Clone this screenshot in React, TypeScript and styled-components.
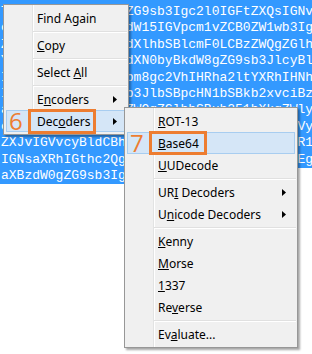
import React from "react";
import styled, { createGlobalStyle } from "styled-components";

const paragraph =
    "Lorem ipsum dolor sit amet, consetetur sadipscing elitr, sed diam nonumy eirmod tempor invidunt ut labore et dolore magna aliquyam erat, sed diam voluptua. At vero eos et accusam et justo duo dolores et ea rebum. Stet clita kasd gubergren, no sea takimata sanctus est Lorem ipsum dolor sit amet.";

// base64 with MIME style wrapping, 76 chars a line
const encodedLines = btoa(paragraph + " " + paragraph).match(/.{1,76}/g) ?? [];

type Entry =
    | { kind: "sep" }
    | { kind: "item"; label: string; key?: number; sub?: boolean; active?: boolean; mark?: string };

const mainMenu: Entry[] = [
    { kind: "item", label: "Find Again" },
    { kind: "sep" },
    { kind: "item", label: "Copy", key: 0 },
    { kind: "sep" },
    { kind: "item", label: "Select All", key: 7 },
    { kind: "sep" },
    { kind: "item", label: "Encoders", key: 1, sub: true },
    { kind: "item", label: "Decoders", key: 3, sub: true, active: true, mark: "6" },
];

const decodersMenu: Entry[] = [
    { kind: "item", label: "ROT-13", key: 0 },
    { kind: "item", label: "Base64", key: 0, active: true, mark: "7" },
    { kind: "item", label: "UUDecode", key: 0 },
    { kind: "sep" },
    { kind: "item", label: "URI Decoders", key: 2, sub: true },
    { kind: "item", label: "Unicode Decoders", key: 1, sub: true },
    { kind: "sep" },
    { kind: "item", label: "Kenny", key: 0 },
    { kind: "item", label: "Morse", key: 0 },
    { kind: "item", label: "1337", key: 0 },
    { kind: "item", label: "Reverse", key: 2 },
    { kind: "sep" },
    { kind: "item", label: "Evaluate...", key: 2 },
];

function Label({ text, at }: { text: string; at?: number }) {
    if (at === undefined) return <>{text}</>;
    return (
        <>
            {text.slice(0, at)}
            <u>{text[at]}</u>
            {text.slice(at + 1)}
        </>
    );
}

function MenuList({ entries, boxWidth, boxHeight }: { entries: Entry[]; boxWidth: number; boxHeight: number }) {
    return (
        <>
            {entries.map((entry, i) =>
                entry.kind === "sep" ? (
                    <Separator key={i} />
                ) : (
                    <Item key={i} $active={!!entry.active}>
                        {entry.mark && <Callout>{entry.mark}</Callout>}
                        <ItemText>
                            <Label text={entry.label} at={entry.key} />
                            {entry.active && <MarkBox $w={boxWidth} $h={boxHeight} />}
                        </ItemText>
                        {entry.sub && (
                            <Arrow width="4" height="7" viewBox="0 0 4 7">
                                <polygon points="0,0 4,3.5 0,7" fill="#000" />
                            </Arrow>
                        )}
                    </Item>
                )
            )}
        </>
    );
}

export default function App() {
    return (
        <Stage>
            <GlobalStyle />
            <Editor>
                <Selected>
                    {encodedLines.slice(0, -1).map((line, i) => (
                        <CodeLine key={i}>{line}</CodeLine>
                    ))}
                </Selected>
                <LastLine>{encodedLines[encodedLines.length - 1]}</LastLine>
            </Editor>

            <MainMenu>
                <MenuList entries={mainMenu} boxWidth={68} boxHeight={25} />
            </MainMenu>

            <SubMenu>
                <MenuList entries={decodersMenu} boxWidth={58} boxHeight={24} />
            </SubMenu>
        </Stage>
    );
}

const GlobalStyle = createGlobalStyle`
    html, body {
        margin: 0;
        padding: 0;
        background: #fff;
        overflow: hidden;
    }
`;

const Stage = styled.div`
    position: relative;
    width: 312px;
    height: 354px;
    overflow: hidden;
    background: #fff;
`;

const Editor = styled.div`
    font-family: "Liberation Mono", "DejaVu Sans Mono", monospace;
    font-size: 13px;
    line-height: 16.4px;
    color: #fff;
    white-space: pre;
`;

const Selected = styled.div`
    background: #3399ff;
    padding-top: 4px;
`;

const CodeLine = styled.div`
    padding-left: 1px;
`;

const LastLine = styled.div`
    display: inline-block;
    background: #3399ff;
    padding-left: 1px;
`;

/* the two popups lie over the editor, so they are placed absolutely */
const Menu = styled.div`
    position: absolute;
    box-sizing: border-box;
    padding: 2px 0;
    border: 1px solid #979797;
    background: linear-gradient(
        to right,
        #f0f0f0 28px,
        #e2e3e3 28px,
        #e2e3e3 29px,
        #ffffff 29px,
        #ffffff 30px,
        #f0f0f0 30px
    );
    box-shadow: 2px 2px 2px rgba(0, 0, 0, 0.35);
    font-family: "Noto Sans", "Open Sans", sans-serif;
    font-size: 12px;
    color: #000;
`;

const MainMenu = styled(Menu)`
    left: 3px;
    top: 4px;
    width: 126px;
`;

const SubMenu = styled(Menu)`
    left: 124px;
    top: 107px;
    width: 174px;
`;

const Item = styled.div<{ $active: boolean }>`
    position: relative;
    display: flex;
    align-items: center;
    box-sizing: border-box;
    height: 22px;
    margin: 0 2px;
    padding-left: 30px;
    padding-right: 8px;
    border: 1px solid ${(p) => (p.$active ? "#a8cdf0" : "transparent")};
    background: ${(p) => (p.$active ? "#d5e6f7" : "transparent")};
    white-space: nowrap;
`;

const ItemText = styled.span`
    position: relative;
    flex: 1;
`;

const Arrow = styled.svg`
    display: block;
    flex: none;
`;

const Separator = styled.div`
    height: 5px;
    margin-left: 29px;
    margin-right: 1px;
    background: linear-gradient(
        to bottom,
        transparent 2px,
        #e0e0e0 2px,
        #e0e0e0 3px,
        #fff 3px,
        #fff 4px,
        transparent 4px
    );
`;

/* orange step numbers and frames drawn over the items */
const Callout = styled.span`
    position: absolute;
    left: 2px;
    top: -3px;
    font-family: "Open Sans", "Noto Sans", sans-serif;
    font-size: 24px;
    line-height: 26px;
    color: #ed7d31;
`;

const MarkBox = styled.span<{ $w: number; $h: number }>`
    position: absolute;
    left: -9px;
    top: -4px;
    width: ${(p) => p.$w}px;
    height: ${(p) => p.$h}px;
    box-sizing: border-box;
    border: 3px solid #ed7d31;
`;
